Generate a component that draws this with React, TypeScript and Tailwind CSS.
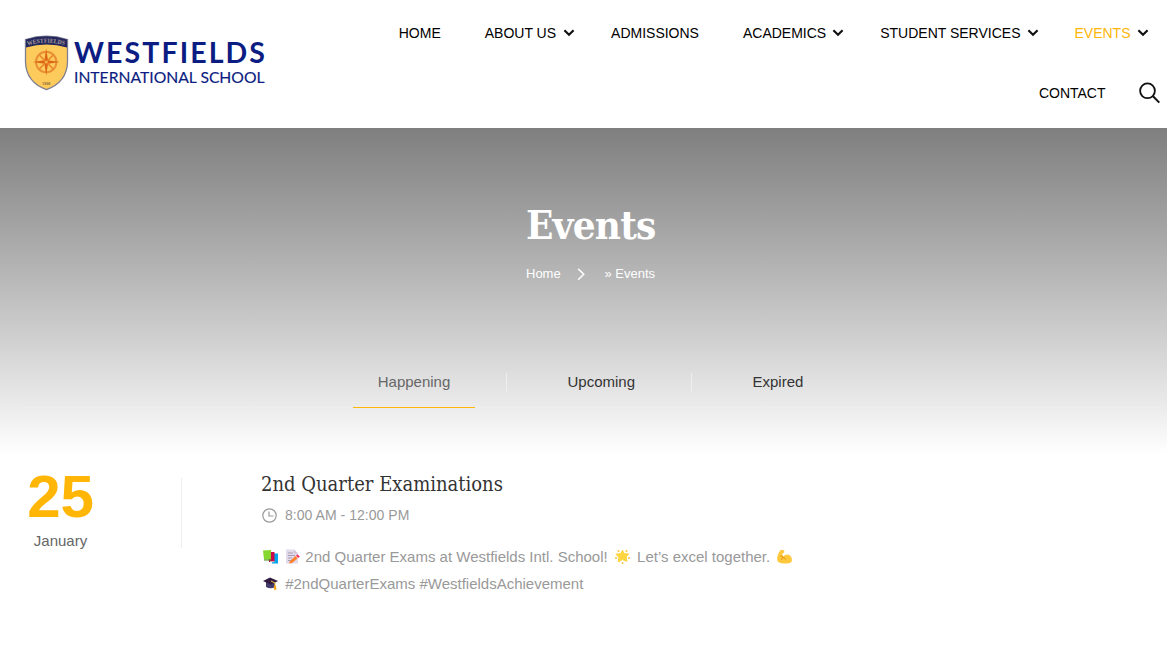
import React from "react";

const SANS = "font-['Liberation_Sans',Arial,sans-serif]";
const SLAB = "font-['DejaVu_Serif_Condensed','DejaVu_Serif',serif]";

function Chevron({ className = "" }: { className?: string }) {
  return (
    <svg className={`h-[8px] w-[12px] ${className}`} viewBox="0 0 12 8" fill="none" stroke="#111" strokeWidth="2.2">
      <path d="M1.4 1.3 6 5.7 10.6 1.3" />
    </svg>
  );
}

function Logo() {
  return (
    <svg className="mt-[34px] ml-[24px] h-[58px] w-[244px] shrink-0" viewBox="24 34 244 58">
      <path d="M25.500 39.500Q36 36.200 46.500 36.200Q57 36.200 67.500 39.500V62Q67 82 46.500 89.700Q26 82 25.500 62Z" fill="#fdca5c" stroke="#7e7f91" strokeWidth="1.300" />
      <path d="M26 39.500Q46.500 33 67 39.500V47.500Q46.500 41.500 26 47.500Z" fill="#25285f" />
      <path id="shield-arc" d="M27.500 45.500Q46.500 39.800 65.500 45.500" fill="none" />
      <text fontFamily="Liberation Serif" fontWeight="700" fontSize="6.200" fill="#a99a97">
        <textPath href="#shield-arc" startOffset="0" textLength="37.500" lengthAdjust="spacingAndGlyphs">WESTFIELDS</textPath>
      </text>
      <circle cx="46.200" cy="62" r="10.200" fill="none" stroke="#e98f35" strokeWidth="2" />
      <path d="M46.200 48.500 48 60.200 59.800 62 48 63.800 46.200 75.800 44.400 63.800 32.600 62 44.400 60.200Z" fill="#dc6716" />
      <path d="M39.500 55.300 53 68.700M53 55.300 39.500 68.700" stroke="#e98428" strokeWidth="1.500" />
      <circle cx="46.200" cy="62" r="1.300" fill="#f6b750" />
      <text x="42.300" y="85" fontFamily="Liberation Sans" fontWeight="700" fontSize="3.600" fill="#8b6a36">1998</text>
      <text x="74" y="63.300" fontFamily="Lato" fontWeight="700" fontSize="28.500" fill="#0b1c82" textLength="191" lengthAdjust="spacing">WESTFIELDS</text>
      <text x="74" y="83" fontFamily="Lato" fontWeight="400" fontSize="16" fill="#0b1c82" stroke="#0b1c82" strokeWidth=".15" textLength="190.500" lengthAdjust="spacingAndGlyphs">INTERNATIONAL SCHOOL</text>
    </svg>
  );
}

function Nav() {
  return (
    <nav className="mr-[7px] flex flex-col items-end text-[14px] leading-[20px] text-black">
      <div className="mt-[23px] mr-[11px] flex whitespace-nowrap">
        <a className="mr-[44px]">HOME</a>
        <a className="mr-[36px] flex items-center">ABOUT US<Chevron className="ml-[7px]" /></a>
        <a className="mr-[44px]">ADMISSIONS</a>
        <a className="mr-[36px] flex items-center">ACADEMICS<Chevron className="ml-[6px]" /></a>
        <a className="mr-[35.500px] flex items-center">STUDENT SERVICES<Chevron className="ml-[6.500px]" /></a>
        <a className="flex items-center text-[#ffb606]">EVENTS<Chevron className="ml-[6.500px]" /></a>
      </div>
      <div className="mt-[39px] flex items-center">
        <a className="mr-[33.500px]">CONTACT</a>
        <svg className="h-[22px] w-[21px]" viewBox="0 0 21 22" fill="none" stroke="#111" strokeWidth="1.800">
          <circle cx="8.500" cy="8.800" r="7.400" />
          <path d="m13.800 14 6.500 6.600" strokeWidth="2" />
        </svg>
      </div>
    </nav>
  );
}

function Books() {
  return (
    <svg className="inline-block h-[15px] w-[15px] align-[-2px]" viewBox="0 0 15 15">
      <path d="M8 4.500h7V14.500H9z" fill="#00a6ed" />
      <path d="M5 3h6.500v10H6z" fill="#ca0b4a" />
      <path d="M7 12.200h4.500v1H7z" fill="#d3d3d3" />
      <path d="M0 1.500 8 1v9.500H1z" fill="#86d72f" />
      <path d="M1 10.500h7v1H1z" fill="#44911b" />
    </svg>
  );
}

function Memo() {
  return (
    <svg className="inline-block h-[15px] w-[15px] align-[-2px]" viewBox="0 0 15 15">
      <path d="M1 .5h8l4 4v10H1z" fill="#e3daec" />
      <path d="M9 .5v4h4z" fill="#cdc4d6" />
      <path d="M3 4h5M3 6.500h7M3 9h4M3 11.500h3" stroke="#998ea4" strokeWidth=".8" />
      <path d="m5 12 5.500-5 2 2.400L7 14l-3 .5z" fill="#ff822d" />
      <path d="M11 6.700 12.500 5.300 14.800 7.500 13.300 9z" fill="#f92f60" />
    </svg>
  );
}

function Star() {
  return (
    <svg className="inline-block h-[15px] w-[15px] align-[-2px]" viewBox="0 0 15 15">
      <path d="m7.500 1.300 1.800 3.400 4.400.2-2.600 3.200.9 4.300-4.500-1.800L3.300 13l.5-4.600L1 5.100l4.600-.4z" fill="#fcd53f" stroke="#fcd53f" strokeLinejoin="round" />
      <g fill="#f9c23c">
        <circle cx="3.500" cy="2" r="1" /><circle cx="11.500" cy="2" r="1" />
        <circle cx="1" cy="9" r="1" /><circle cx="14" cy="9" r="1" /><circle cx="7.500" cy="14" r="1" />
      </g>
    </svg>
  );
}

function Muscle() {
  return (
    <svg className="inline-block h-[15px] w-[15px] align-[-2px]" viewBox="0 0 15 15">
      <path d="M3.200 1.500Q5-.2 7 1.500q.8 1.500-.5 2.500L5.300 4.500l.8 3Q10 3.800 13.500 7q2 2.500 1.200 5.500-1.500 2-6 2-4 .3-7.200-1.200Q-.3 11.500.3 8 1 4 3.200 1.500Z" fill="#ffc83d" />
      <path d="m3.500 7 3 1.300L4 11M6.500 8.500q1.500.3 2 2" stroke="#d67d00" strokeWidth=".7" fill="none" />
    </svg>
  );
}

function Cap() {
  return (
    <svg className="inline-block h-[15px] w-[15px] align-[-2px]" viewBox="0 0 15 15">
      <path d="M3 6h9v5q-4 2.500-9 0z" fill="#433b6b" />
      <path d="m0 5 7-3.500L15 5 8 8.800z" fill="#321b41" />
      <path d="m8 5 4 2v6" stroke="#f9c23c" fill="none" />
      <path d="M11.200 9.500h1.700l.6 4.300h-2.600z" fill="#f9a51a" />
    </svg>
  );
}

function Tabs() {
  return (
    <div className="mr-[6px] ml-[21px] flex h-[53px] justify-center border-b border-[#eee] text-[15px] leading-[20px] text-[#333]">
      <div className="-ml-px h-[53px] w-[122px] border-b border-[#ffb606] pt-[17px] text-center text-[#666]">Happening</div>
      <div className="mt-[18px] ml-[31px] h-[19px] w-px bg-[#eee]" />
      <div className="w-[184px] pt-[17px] pl-[60.500px]">Upcoming</div>
      <div className="mt-[18px] h-[19px] w-px bg-[#eee]" />
      <div className="w-[136px] pt-[17px] pl-[60.500px]">Expired</div>
    </div>
  );
}

export default function App() {
  return (
    <div className={`h-[648px] w-full overflow-hidden bg-white ${SANS}`}>
      <header className="flex h-[128px] justify-between">
        <Logo />
        <Nav />
      </header>
      <section className="h-[330px] bg-linear-to-b from-[#7f7f7f] to-white to-[99%]">
        <div className="mx-auto h-[227px] w-[129px] translate-x-[7px] pt-[70px] text-white">
          <h1 className={`h-[54px] text-[40px] leading-[54px] font-bold tracking-[-0.8px] ${SLAB}`}>Events</h1>
          <div className="mt-[12px] flex items-center text-[13px] leading-[20px] whitespace-nowrap">
            Home
            <svg className="mr-[19px] ml-[16px] h-[13px] w-[9px]" viewBox="0 0 9 13" fill="none" stroke="white" strokeWidth="1.500">
              <path d="M1.200.7 7 6.300 1.200 12" />
            </svg>
            » Events
          </div>
        </div>
        <Tabs />
      </section>
      <main className="flex pt-[9px]">
        <div className="w-[121px] text-center">
          <div className="text-[60px] leading-[60px] font-bold text-[#ffb606]">25</div>
          <div className="mt-[4px] text-[15px] leading-[20px] text-[#666]">January</div>
        </div>
        <div className="mt-[11px] ml-[60px] h-[70px] w-px bg-[#eee]" />
        <article className="ml-[79px] text-[15px] text-[#999]">
          <h2 className={`mt-[2px] h-[30px] text-[20px] leading-[30px] whitespace-nowrap text-[#333] ${SLAB}`}>2nd Quarter Examinations</h2>
          <div className="mt-[6px] flex items-center text-[14px] leading-[20px] tracking-[0.04px]">
            <svg className="mr-[8px] ml-[1px] h-[15px] w-[15px]" viewBox="0 0 15 15" fill="none" stroke="#999" strokeWidth="1.200">
              <circle cx="7.500" cy="7.500" r="6.700" />
              <path d="M7 3.500v4.500h4.500" />
            </svg>
            8:00 AM - 12:00 PM
          </div>
          <p className="mt-[18px] whitespace-nowrap leading-[27px]">
            <span className="mr-[3px] ml-[2px]"><Books /></span> <span className="mr-[2px]"><Memo /></span> <span className="-ml-[1px]">2nd Quarter Exams at Westfields Intl. School!</span> <span className="mr-[2px] ml-[3px]"><Star /></span> <span className="ml-[1px]">Let’s excel together.</span> <span className="ml-[3px]"><Muscle /></span>
            <br />
            <span className="mr-[3px] ml-[2px]"><Cap /></span> #2ndQuarterExams #WestfieldsAchievement
          </p>
        </article>
      </main>
    </div>
  );
}
